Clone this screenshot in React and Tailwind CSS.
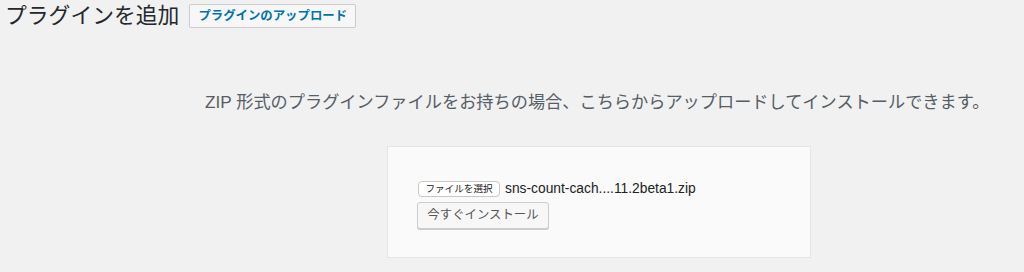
import React from "react";

const font = {
  fontFamily: '"Liberation Sans", "Noto Sans CJK JP", sans-serif',
};

function Header() {
  return (
    <div className="flex items-center h-[32px] pl-[5px]">
      <h1 className="text-[21.8px] leading-[32px] font-normal text-[#23282d]">
        プラグインを追加
      </h1>
      <button className="ml-[10px] h-[24px] px-[8px] border border-[#cccccc] bg-[#f7f7f7] rounded-[2px] text-[12.4px] font-bold text-[#0073aa] leading-none">
        プラグインのアップロード
      </button>
    </div>
  );
}

function UploadBox() {
  return (
    <div className="w-[424px] h-[112px] border border-[#e5e5e5] bg-[#fafafa] pt-[32px] pl-[30px]">
      {/* file input row */}
      <div className="flex items-center h-[20px]">
        <span className="h-[16px] w-[82px] flex items-center justify-center border border-[#c8c8c8] bg-white rounded-[4px] text-[9.6px] text-[#222] leading-none">
          ファイルを選択
        </span>
        <span className="ml-[5px] text-[13.8px] text-[#222]">
          sns-count-cach....11.2beta1.zip
        </span>
      </div>
      <button className="mt-[3px] h-[27px] w-[132px] -ml-px border border-[#cccccc] bg-[#f7f7f7] rounded-[3px] shadow-[0_1px_0_#cccccc] text-[12.4px] text-[#555555] leading-none">
        今すぐインストール
      </button>
    </div>
  );
}

export default function App() {
  return (
    <div className="w-full h-[272px] bg-[#f1f1f1] overflow-hidden" style={font}>
      <Header />
      <p className="mt-[58px] pl-[205px] text-[17.2px] leading-[25px] text-[#555d66] whitespace-nowrap">
        ZIP 形式のプラグインファイルをお持ちの場合、こちらからアップロードしてインストールできます。
      </p>
      <div className="mt-[31px] ml-[387px]">
        <UploadBox />
      </div>
    </div>
  );
}
